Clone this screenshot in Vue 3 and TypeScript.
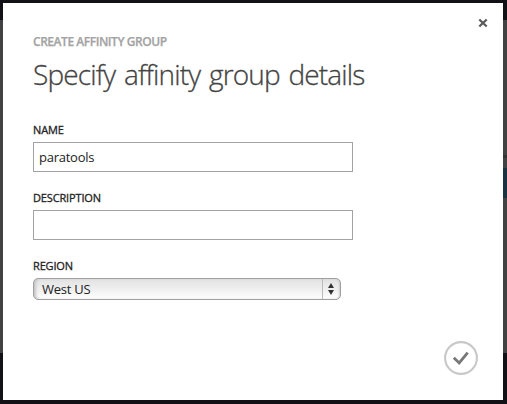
<script setup lang="ts">
import { ref } from 'vue'

const name = ref('paratools')
const description = ref('')
const region = ref('West US')
</script>

<template>
  <div class="backdrop">
    <div class="page"><span class="rule"></span><span class="selected"></span></div>
    <main class="dialog" role="dialog" aria-labelledby="title">
      <button class="close" type="button" aria-label="Close">
        <svg width="10" height="10" viewBox="0 0 10 10">
          <path d="M1.3 1.5 8.7 8.5M8.7 1.5 1.3 8.5" fill="none" stroke="#5c5c5c" stroke-width="2.3" />
        </svg>
      </button>
      <p class="eyebrow">CREATE AFFINITY GROUP</p>
      <h1 id="title">Specify affinity group details</h1>
      <form @submit.prevent>
        <label class="field">
          <span class="label">NAME</span>
          <input v-model="name" type="text" />
        </label>
        <label class="field">
          <span class="label">DESCRIPTION</span>
          <input v-model="description" type="text" />
        </label>
        <div class="field">
          <span class="label">REGION</span>
          <button class="select" type="button" aria-haspopup="listbox">
            <span class="value">{{ region }}</span>
            <span class="stepper">
              <svg width="6" height="12" viewBox="0 0 6 12">
                <path d="M3 0 6 5H0ZM3 12 0 7H6Z" fill="#333" />
              </svg>
            </span>
          </button>
        </div>
      </form>
      <button class="confirm" type="button" aria-label="Complete">
        <svg width="34" height="34" viewBox="0 0 34 34">
          <circle cx="17" cy="17" r="15.9" fill="#fff" stroke="#c8c8c8" stroke-width="2.1" />
          <path d="M9.8 16.8 15.2 22 23.7 11.7" fill="none" stroke="#777" stroke-width="2.8" />
        </svg>
      </button>
    </main>
  </div>
</template>

<style>
body {
  margin: 0;
  overflow: hidden;
}
</style>

<style scoped>
.backdrop {
  position: relative;
  box-sizing: border-box;
  width: 507px;
  height: 404px;
  padding: 3px 4px 4px 3px;
  background: #111116;
  font-family: "Open Sans", "Noto Sans", sans-serif;
}
.page {
  position: absolute;
  inset: 20px 0 51px;
  background: #424242;
}
.rule,
.selected {
  position: absolute;
  right: 0;
  width: 4px;
}
.rule {
  top: 135px;
  height: 3px;
  background: #333;
}
.selected {
  top: 148px;
  height: 30px;
  background: #1b3340;
}
.dialog {
  position: relative;
  box-sizing: border-box;
  height: 397px;
  padding: 30px 30px 0;
  background: #fff;
}
button {
  padding: 0;
  border: 0;
  background: none;
  font: inherit;
}
svg {
  display: block;
}
.close {
  position: absolute;
  top: 15px;
  right: 15px;
}
.eyebrow {
  margin: 0;
  font-size: 12px;
  font-weight: 600;
  line-height: 18px;
  letter-spacing: -0.45px;
  color: #a3a3a3;
  -webkit-text-stroke: 0.25px #a3a3a3;
  white-space: nowrap;
}
h1 {
  margin: 3px 0 0;
  font-size: 28px;
  font-weight: 300;
  line-height: 40px;
  letter-spacing: -0.85px;
  word-spacing: 2.3px;
  color: #444;
  -webkit-text-stroke: 0.3px #444;
  white-space: nowrap;
}
form {
  display: grid;
  gap: 18px;
  margin-top: 27px;
}
.field {
  display: block;
}
.label {
  display: block;
  height: 21px;
  font-size: 11px;
  line-height: 18px;
  letter-spacing: -0.15px;
  color: #222;
  -webkit-text-stroke: 0.3px #222;
}
input {
  display: block;
  box-sizing: border-box;
  width: 320px;
  height: 30px;
  margin: 0 0 -1px;
  padding: 0 5px 1px;
  border: 1px solid #a3a3a3;
  border-radius: 0;
  outline: 0;
  background: #fff;
  color: #222;
  font: 13px/20px "Open Sans", "Noto Sans", sans-serif;
  letter-spacing: -0.25px;
}
.select {
  display: flex;
  box-sizing: border-box;
  width: 308px;
  height: 22px;
  border: 1px solid #a0a0a0;
  border-radius: 5px;
  overflow: hidden;
  background: linear-gradient(#e2e2e2, #f0f0f0 55%, #fff);
  box-shadow: inset 3px 0 3px -1px #c4c4c4, inset -2px 0 2px -1px #ccc;
  color: #222;
}
.value {
  flex: 1;
  padding-left: 8px;
  font-size: 13px;
  line-height: 21px;
  letter-spacing: -0.25px;
  text-align: left;
}
.stepper {
  display: flex;
  align-items: center;
  justify-content: center;
  box-sizing: border-box;
  width: 18px;
  padding-right: 1px;
  border-left: 1px solid #bbb;
}
.confirm {
  position: absolute;
  right: 25px;
  bottom: 25px;
}
</style>
